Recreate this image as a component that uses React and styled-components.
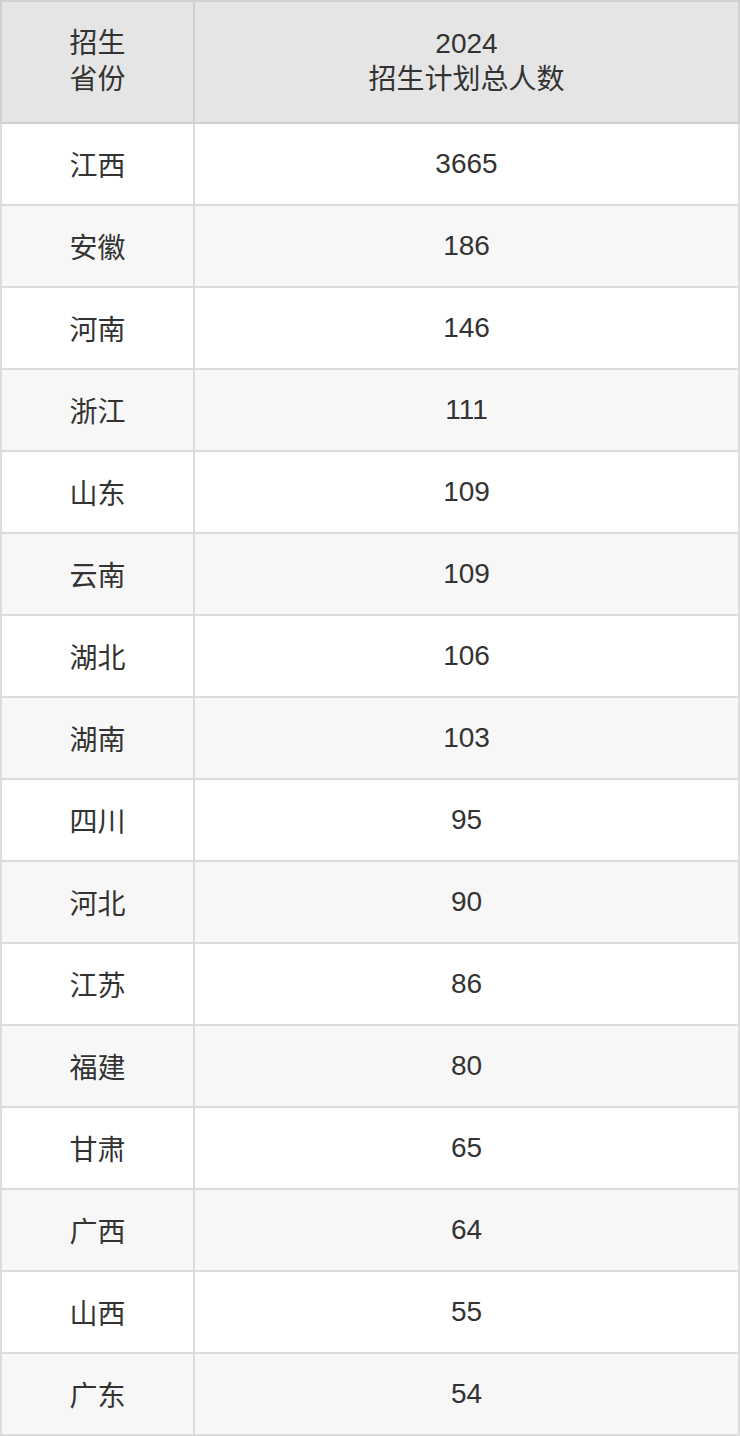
import React from 'react';
import styled, { createGlobalStyle } from 'styled-components';

const GlobalStyle = createGlobalStyle`
    html, body {
        margin: 0;
        padding: 0;
        background: #fff;
    }
    body {
        font-family: "Liberation Sans", "Noto Sans CJK SC", sans-serif;
        color: #333;
    }
`;

const Table = styled.table`
    width: 740px;
    border-collapse: collapse;
    table-layout: fixed;
`;

const HeadCell = styled.th`
    height: 120px;
    padding: 0;
    background: #e5e5e5;
    border: 2px solid #d0d0d0;
    font-weight: normal;
    font-size: 28px;
    line-height: 36px;
    text-align: center;
    width: ${p => p.$w || 'auto'};
`;

const Row = styled.tr`
    background: ${p => (p.$odd ? '#f7f7f7' : '#fff')};
`;

const Cell = styled.td`
    height: 80px;
    padding: 0;
    border: 2px solid #dcdcdc;
    font-size: 28px;
    text-align: center;
`;

const rows = [
    ['江西', '3665'],
    ['安徽', '186'],
    ['河南', '146'],
    ['浙江', '111'],
    ['山东', '109'],
    ['云南', '109'],
    ['湖北', '106'],
    ['湖南', '103'],
    ['四川', '95'],
    ['河北', '90'],
    ['江苏', '86'],
    ['福建', '80'],
    ['甘肃', '65'],
    ['广西', '64'],
    ['山西', '55'],
    ['广东', '54'],
];

const App = () => {
    return (
        <>
            <GlobalStyle />
            <Table>
                <thead>
                    <tr>
                        <HeadCell $w="191px">招生<br />省份</HeadCell>
                        <HeadCell>2024<br />招生计划总人数</HeadCell>
                    </tr>
                </thead>
                <tbody>
                    {rows.map(([prov, num], i) => (
                        <Row key={prov + i} $odd={i % 2 === 1}>
                            <Cell>{prov}</Cell>
                            <Cell>{num}</Cell>
                        </Row>
                    ))}
                </tbody>
            </Table>
        </>
    );
};

export default App;
